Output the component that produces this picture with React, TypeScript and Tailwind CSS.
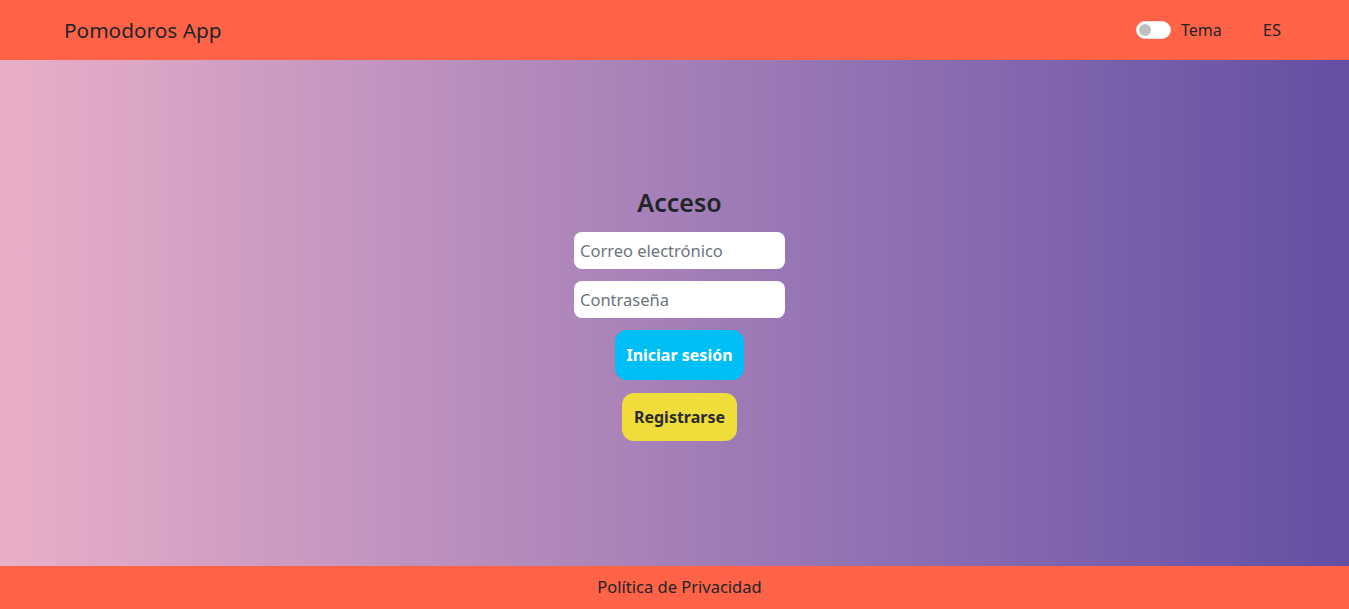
import React from "react";

export default function App() {
  return (
    <div
      className="flex h-[609px] w-full flex-col text-[#212529]"
      style={{ fontFamily: '"Noto Sans", "Open Sans", sans-serif' }}
    >
      <header className="flex h-[60px] shrink-0 items-center justify-between bg-[#ff6347] pl-16 pr-[68px]">
        <div className="text-[20.8px] leading-[28px] text-[#212529]">Pomodoros App</div>
        <div className="flex items-center">
          <div className="flex items-center gap-[10px]">
            <div className="flex h-[18px] w-[35px] items-center rounded-full border border-[#dee2e6] bg-white px-[2px]">
              <div className="h-[12px] w-[12px] rounded-full bg-[#bfbfbf]" />
            </div>
            <span className="text-[16px]">Tema</span>
          </div>
          <span className="ml-[41px] text-[16.5px]">ES</span>
        </div>
      </header>
      <main className="flex flex-1 flex-col items-center justify-center bg-gradient-to-r from-[#eaafc8] to-[#654ea3] pl-[10px] pt-[2px]">
        <h2 className="mb-[16px] text-[25px] font-semibold leading-[28px] text-[#212529]">Acceso</h2>
        <input
          className="mb-[12px] h-[37px] w-[211px] rounded-[8px] bg-white px-[6px] text-[16.5px] text-[#212529] outline-none placeholder:text-[#6c757d]"
          placeholder="Correo electrónico"
        />
        <input
          type="password"
          className="mb-[12px] h-[37px] w-[211px] rounded-[8px] bg-white px-[6px] text-[16.5px] text-[#212529] outline-none placeholder:text-[#6c757d]"
          placeholder="Contraseña"
        />
        <button className="mb-[13px] h-[50px] w-[129px] rounded-[12px] bg-[#00bff5] text-[16px] font-bold text-white">
          Iniciar sesión
        </button>
        <button className="h-[48px] w-[115px] rounded-[12px] bg-[#f0dc3a] text-[16px] font-bold text-[#2b2b2b]">
          Registrarse
        </button>
      </main>
      <footer className="flex h-[43px] shrink-0 items-center justify-center bg-[#ff6347] pl-[10px] text-[16.5px]">
        Política de Privacidad
      </footer>
    </div>
  );
}
